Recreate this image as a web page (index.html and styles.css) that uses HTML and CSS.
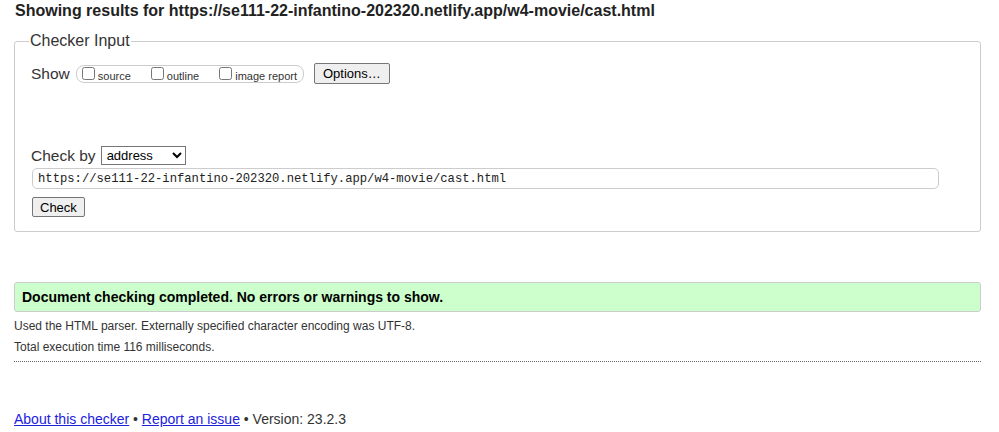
FILE: index.html
```html
<!DOCTYPE html>
<html lang="en">
<head>
<meta charset="utf-8">
<title>Showing results for https://se111-22-infantino-202320.netlify.app/w4-movie/cast.html - Nu Html Checker</title>
<link rel="stylesheet" href="styles.css">
</head>
<body>
<h2 class="title">Showing results for https://se111-22-infantino-202320.netlify.app/w4-movie/cast.html</h2>
<form class="checker-form">
<fieldset class="checker">
<legend class="checker-legend">Checker Input</legend>
<div class="show-row">
<span class="row-label">Show</span>
<span class="opt-group">
<label class="opt"><input type="checkbox" class="opt-box"><span class="opt-text">source</span></label>
<label class="opt"><input type="checkbox" class="opt-box"><span class="opt-text">outline</span></label>
<label class="opt"><input type="checkbox" class="opt-box"><span class="opt-text">image report</span></label>
</span>
<button type="button" class="btn btn-options">Options…</button>
</div>
<div class="checkby-row">
<span class="row-label">Check by</span>
<select class="checkby-select">
<option>address</option>
<option>file upload</option>
<option>text input</option>
</select>
</div>
<input type="url" class="url-input" value="https://se111-22-infantino-202320.netlify.app/w4-movie/cast.html">
<div class="submit-row"><button type="button" class="btn btn-check">Check</button></div>
</fieldset>
</form>
<p class="success">Document checking completed. No errors or warnings to show.</p>
<p class="details">Used the HTML parser. Externally specified character encoding was UTF-8.</p>
<p class="details">Total execution time 116 milliseconds.</p>
<hr class="rule">
<p class="footer"><a href="#" class="footer-link">About this checker</a> • <a href="#" class="footer-link">Report an issue</a> • Version: 23.2.3</p>
</body>
</html>
```
FILE: styles.css
```css
html, body {
  background: #fff;
}
body {
  margin: 0;
  padding: 0 18px 0 14px;
  font-family: "Liberation Sans", Arial, sans-serif;
  color: #222;
}
.title {
  margin: 0;
  padding: 1px 0 0 1px;
  font-size: 16px;
  line-height: 20px;
  font-weight: bold;
  color: #222;
}
.checker-form {
  margin: 11px 0 0;
}
.checker {
  margin: 0;
  border: 1px solid #ccc;
  border-radius: 3px;
  padding: 0 16px 14px 16px;
}
.checker-legend {
  margin-left: -2px;
  padding: 0 1px;
  font-size: 16px;
  line-height: 18px;
  color: #333;
}
.show-row {
  display: flex;
  align-items: center;
  margin-top: 13px;
  height: 21px;
}
.row-label {
  font-size: 15.5px;
  color: #333;
}
.opt-group {
  display: inline-flex;
  align-items: flex-start;
  gap: 20px;
  margin-left: 6px;
  height: 16px;
  padding: 0 6px 0 5px;
  border: 1px solid #ccc;
  border-radius: 8px;
}
.opt {
  display: flex;
  align-items: flex-start;
  height: 16px;
  font-size: 11px;
  color: #333;
}
.opt-box {
  width: 13px;
  height: 13px;
  margin: 1px 3px 0 0;
}
.opt-text {
  padding-top: 2px;
  line-height: 16px;
}
.btn {
  font-family: "Liberation Sans", Arial, sans-serif;
  font-size: 13px;
  color: #000;
  background: #efefef;
  border: 1px solid #767676;
  border-radius: 2px;
  margin: 0;
}
.btn-options {
  margin-left: 10px;
  height: 21px;
  padding: 0 8px;
}
.checkby-row {
  display: flex;
  align-items: center;
  margin-top: 62px;
  height: 19px;
}
.checkby-select {
  margin-left: 5px;
  width: 85px;
  height: 19px;
  font-family: "Liberation Sans", Arial, sans-serif;
  font-size: 13px;
  padding: 0 0 0 1px;
  border: 1px solid #767676;
  border-radius: 0;
  background: #fff;
  color: #000;
}
.url-input {
  display: block;
  box-sizing: border-box;
  width: 907px;
  height: 21px;
  margin: 3px 0 0 1px;
  padding: 0 5px;
  border: 1px solid #ccc;
  border-radius: 5px;
  font-family: "Liberation Mono", "Courier New", monospace;
  font-size: 12.2px;
  color: #222;
  background: #fff;
}
.submit-row {
  margin-top: 8px;
}
.btn-check {
  height: 20px;
  padding: 0 7px;
  margin-left: 1px;
}
.success {
  margin: 50px 0 0;
  padding: 0 7px;
  border: 1px solid #ccc;
  border-radius: 3px;
  background: #ccffcc;
  font-size: 14px;
  font-weight: bold;
  line-height: 28px;
  color: #000;
}
.details {
  margin: 6px 0 0;
  font-size: 12px;
  line-height: 17px;
  color: #333;
}
.details + .details {
  margin-top: 4px;
}
.rule {
  margin: 5px 0 0;
  border: 0;
  border-top: 1px dotted #666;
  height: 0;
}
.footer {
  margin: 47px 0 0;
  font-size: 14px;
  line-height: 20px;
  color: #333;
}
.footer-link {
  color: #2222dd;
}
```
